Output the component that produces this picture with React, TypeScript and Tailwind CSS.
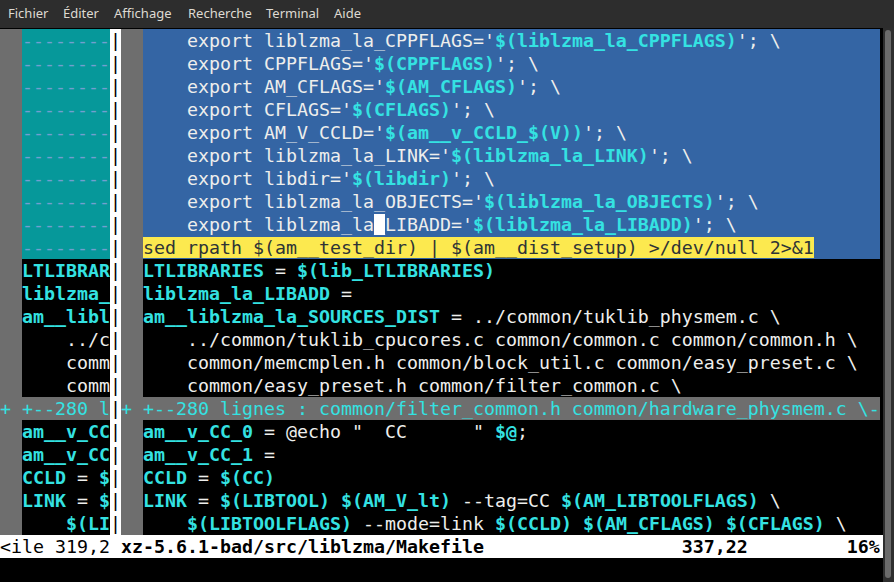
import React from "react";

type Seg = [string, string?];

const W = "text-[#eeeeec]";
const C = "text-[#34e2e2] font-bold";
const DASH = "text-[#729fcf]";

function exportLine(name: string, value: string): Seg[] {
  return [
    [`    export ${name}='`, W],
    [value, C],
    ["'; \\", W],
  ];
}

function Segs({ segs }: { segs: Seg[] }) {
  return (
    <>
      {segs.map(([text, cls], i) => (
        <span key={i} className={cls}>
          {text}
        </span>
      ))}
    </>
  );
}

const menu = [
  ["Fichier", "w-[55px]"],
  ["Éditer", "w-[51px]"],
  ["Affichage", "w-[74px]"],
  ["Recherche", "w-[78px]"],
  ["Terminal", "w-[68px]"],
  ["Aide", "w-[40px]"],
];

type Row = {
  left: Seg[];
  right: Seg[];
  leftBg: string;
  rightBg: string;
};

const deleted: Seg[] = [["--------", DASH]];

const rows: Row[] = [
  { left: deleted, leftBg: "bg-[#06989a]", rightBg: "bg-[#3465a4]", right: exportLine("liblzma_la_CPPFLAGS", "$(liblzma_la_CPPFLAGS)") },
  { left: deleted, leftBg: "bg-[#06989a]", rightBg: "bg-[#3465a4]", right: exportLine("CPPFLAGS", "$(CPPFLAGS)") },
  { left: deleted, leftBg: "bg-[#06989a]", rightBg: "bg-[#3465a4]", right: exportLine("AM_CFLAGS", "$(AM_CFLAGS)") },
  { left: deleted, leftBg: "bg-[#06989a]", rightBg: "bg-[#3465a4]", right: exportLine("CFLAGS", "$(CFLAGS)") },
  { left: deleted, leftBg: "bg-[#06989a]", rightBg: "bg-[#3465a4]", right: exportLine("AM_V_CCLD", "$(am__v_CCLD_$(V))") },
  { left: deleted, leftBg: "bg-[#06989a]", rightBg: "bg-[#3465a4]", right: exportLine("liblzma_la_LINK", "$(liblzma_la_LINK)") },
  { left: deleted, leftBg: "bg-[#06989a]", rightBg: "bg-[#3465a4]", right: exportLine("libdir", "$(libdir)") },
  { left: deleted, leftBg: "bg-[#06989a]", rightBg: "bg-[#3465a4]", right: exportLine("liblzma_la_OBJECTS", "$(liblzma_la_OBJECTS)") },
  {
    left: deleted,
    leftBg: "bg-[#06989a]",
    rightBg: "bg-[#3465a4]",
    right: [
      ["    export liblzma_la", W],
      ["_", "bg-white text-white"],
      ["LIBADD='", W],
      ["$(liblzma_la_LIBADD)", C],
      ["'; \\", W],
    ],
  },
  {
    left: deleted,
    leftBg: "bg-[#06989a]",
    rightBg: "bg-[#3465a4]",
    right: [["sed rpath $(am__test_dir) | $(am__dist_setup) >/dev/null 2>&1", "bg-[#fce94f] text-[#2e3436]"]],
  },
  {
    left: [["LTLIBRAR", C]],
    leftBg: "bg-black",
    rightBg: "bg-black",
    right: [
      ["LTLIBRARIES", C],
      [" = ", W],
      ["$(lib_LTLIBRARIES)", C],
    ],
  },
  {
    left: [["liblzma_", C]],
    leftBg: "bg-black",
    rightBg: "bg-black",
    right: [
      ["liblzma_la_LIBADD", C],
      [" =", W],
    ],
  },
  {
    left: [["am__libl", C]],
    leftBg: "bg-black",
    rightBg: "bg-black",
    right: [
      ["am__liblzma_la_SOURCES_DIST", C],
      [" = ../common/tuklib_physmem.c \\", W],
    ],
  },
  {
    left: [["    ../c", W]],
    leftBg: "bg-black",
    rightBg: "bg-black",
    right: [["    ../common/tuklib_cpucores.c common/common.c common/common.h \\", W]],
  },
  {
    left: [["    comm", W]],
    leftBg: "bg-black",
    rightBg: "bg-black",
    right: [["    common/memcmplen.h common/block_util.c common/easy_preset.c \\", W]],
  },
  {
    left: [["    comm", W]],
    leftBg: "bg-black",
    rightBg: "bg-black",
    right: [["    common/easy_preset.h common/filter_common.c \\", W]],
  },
];

const rowsAfterFold: Row[] = [
  {
    left: [["am__v_CC", C]],
    leftBg: "bg-black",
    rightBg: "bg-black",
    right: [
      ["am__v_CC_0", C],
      [' = @echo "  CC      " ', W],
      ["$@", C],
      [";", W],
    ],
  },
  {
    left: [["am__v_CC", C]],
    leftBg: "bg-black",
    rightBg: "bg-black",
    right: [
      ["am__v_CC_1", C],
      [" =", W],
    ],
  },
  {
    left: [["CCLD", C], [" = ", W], ["$", C]],
    leftBg: "bg-black",
    rightBg: "bg-black",
    right: [
      ["CCLD", C],
      [" = ", W],
      ["$(CC)", C],
    ],
  },
  {
    left: [["LINK", C], [" = ", W], ["$", C]],
    leftBg: "bg-black",
    rightBg: "bg-black",
    right: [
      ["LINK", C],
      [" = ", W],
      ["$(LIBTOOL)", C],
      [" ", W],
      ["$(AM_V_lt)", C],
      [" --tag=CC ", W],
      ["$(AM_LIBTOOLFLAGS)", C],
      [" \\", W],
    ],
  },
  {
    left: [["    ", W], ["$(LI", C]],
    leftBg: "bg-black",
    rightBg: "bg-black",
    right: [
      ["    ", W],
      ["$(LIBTOOLFLAGS)", C],
      [" --mode=link ", W],
      ["$(CCLD)", C],
      [" ", W],
      ["$(AM_CFLAGS)", C],
      [" ", W],
      ["$(CFLAGS)", C],
      [" \\", W],
    ],
  },
];

function Line({ row }: { row: Row }) {
  return (
    <div className="flex h-[23px]">
      <span className="w-[22px] shrink-0 bg-[#6e6e6e]" />
      <span className={`w-[88px] shrink-0 overflow-hidden ${row.leftBg}`}>
        <Segs segs={row.left} />
      </span>
      <span className="w-[11px] shrink-0 bg-white text-black">|</span>
      <span className="w-[22px] shrink-0 bg-[#6e6e6e]" />
      <span className={`w-[737px] shrink-0 overflow-hidden ${row.rightBg}`}>
        <Segs segs={row.right} />
      </span>
    </div>
  );
}

function FoldLine() {
  return (
    <div className="flex h-[23px] text-[#34e2e2]">
      <span className="w-[110px] shrink-0 overflow-hidden bg-[#6e6e6e]">+ +--280 l</span>
      <span className="w-[11px] shrink-0 bg-white text-black">|</span>
      <span className="w-[759px] shrink-0 overflow-hidden bg-[#6e6e6e]">
        + +--280 lignes : common/filter_common.h common/hardware_physmem.c \-
      </span>
    </div>
  );
}

function StatusLine() {
  return (
    <div className="flex h-[23px] bg-white text-black">
      <span className="w-[110px] shrink-0 overflow-hidden">{"<ile 319,2"}</span>
      <span className="w-[11px] shrink-0" />
      <span className="w-[759px] shrink-0 overflow-hidden font-bold">
        {"xz-5.6.1-bad/src/liblzma/Makefile                  337,22         16%"}
      </span>
    </div>
  );
}

export default function App() {
  return (
    <div className="flex h-[582px] w-[894px] flex-col overflow-hidden bg-black">
      {/* menu bar */}
      <div className="flex h-[28px] shrink-0 items-center bg-[#2d2d2d] pl-[8px] font-['Noto_Sans',sans-serif] text-[13px] text-[#dedad2]">
        {menu.map(([label, w]) => (
          <span key={label} className={w}>
            {label}
          </span>
        ))}
      </div>

      <div className="flex min-h-0 flex-1">
        {/* terminal */}
        <div className="w-[883px] shrink-0 whitespace-pre bg-black pt-[1px] font-['DejaVu_Sans_Mono',monospace] text-[18.27px] leading-[23px]">
          {rows.map((r, i) => (
            <Line key={i} row={r} />
          ))}
          <FoldLine />
          {rowsAfterFold.map((r, i) => (
            <Line key={i} row={r} />
          ))}
          <StatusLine />
        </div>

        {/* scrollbar */}
        <div className="flex w-[11px] shrink-0 bg-[#2e2e2e] pb-[4px] pl-[2px] pr-[3px] pt-[2px]">
          <div className="w-full rounded-full bg-[#6b6b6b]" />
        </div>
      </div>
    </div>
  );
}
